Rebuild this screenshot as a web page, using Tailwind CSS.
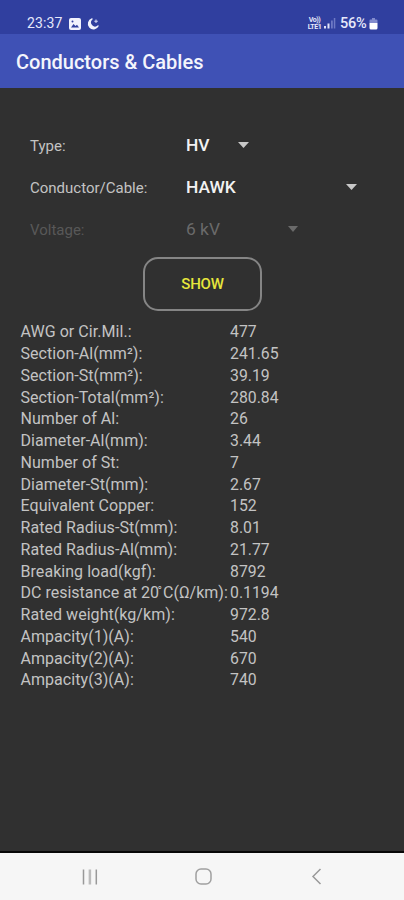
<!DOCTYPE html>
<html lang="en">
<head>
<meta charset="utf-8">
<title>Conductors &amp; Cables</title>
<script src="https://cdn.jsdelivr.net/npm/@tailwindcss/browser@4"></script>
</head>
<body class="w-[404px] h-[900px] overflow-hidden flex flex-col bg-[#303030] font-[Roboto,sans-serif] text-[#c3c3c3]">
<header class="h-[34px] shrink-0 bg-[#303f9f] flex items-start pt-[13px] pl-[27px] pr-[26px] text-[#e6e8fa]">
  <span class="text-[14px] leading-[20px] w-[42px] tracking-[0.1px]">23:37</span>
  <svg class="mt-[5px]" width="12" height="12" viewBox="0 0 12 12"><rect width="12" height="12" rx="2" fill="#f1f2fd"/><path d="M2 9.5 4.5 6 6.5 8 8 6.7 10 9.5z" fill="#303f9f"/><circle cx="3.5" cy="3.6" r="1" fill="#303f9f"/></svg>
  <svg class="mt-[5px] ml-[6px]" width="12" height="12" viewBox="0 0 12 12"><path d="M5 1A5 5 0 1 0 11 8A4.200 4.200 0 0 1 5 1z" fill="#f1f2fd" stroke="#f1f2fd" stroke-width="1.400" stroke-linejoin="round"/><path d="M9 1.500v3.500M7.300 3.300h3.500" stroke="#d4d8f4" stroke-width="1.100"/></svg>
  <div class="ml-auto flex">
    <div class="mt-[4px] w-[15px] text-center text-[7px] leading-[6.500px] font-bold tracking-[-0.4px]"><div>Vo))</div><div>LTE1</div></div>
    <svg class="mt-[4px] ml-px" width="13" height="12" viewBox="0 0 13 12"><path d="M1 9h2v2.500H1zM4.500 6.500h2v5h-2z" fill="#dfe2f8"/><path d="M8 3.500h1.800v8H8zM10.800 1h1.500v10.500h-1.500z" fill="#6d78c4"/></svg>
    <span class="ml-[4px] w-[29px] pt-px text-[14.500px] leading-[20px] font-medium tracking-[-0.2px]">56%</span>
    <svg class="mt-[4px]" width="9" height="13" viewBox="0 0 9 13"><path d="M3 1h3v1.500h1.500q1 0 1 1V6h-8V3.500q0-1 1-1H3z" fill="#828bcd"/><path d="M.5 6h8v5q0 1.500-1.500 1.500H2Q.5 12.500.5 11z" fill="#fff"/></svg>
  </div>
</header>
<div class="h-[54px] shrink-0 bg-[#3f51b5] flex items-center pl-4 pt-[2px]">
  <h1 class="text-[20px] font-medium text-[#f4f5fc] whitespace-nowrap">Conductors &amp; Cables</h1>
</div>
<main class="grow flex flex-col pt-[36px]">
  <section class="pl-[30px]">
    <div class="flex items-center h-[42px]">
      <span class="w-[156px] pt-[2px] text-[15px]">Type:</span><span class="w-[52px] pt-px text-[17.400px] font-medium text-[#f2f2f2]">HV</span>
      <svg width="11" height="6" viewBox="0 0 11 6"><path d="M0 0h11L5.500 6z" fill="#c8c8c8"/></svg>
    </div>
    <div class="flex items-center h-[42px]">
      <span class="w-[156px] pt-[2px] text-[15px]">Conductor/Cable:</span><span class="w-[160px] pt-px text-[17.400px] font-medium text-[#f2f2f2]">HAWK</span>
      <svg width="11" height="6" viewBox="0 0 11 6"><path d="M0 0h11L5.500 6z" fill="#c8c8c8"/></svg>
    </div>
    <div class="flex items-center h-[42px]">
      <span class="w-[156px] pt-[2px] text-[15px] text-[#585858]">Voltage:</span><span class="w-[102px] pt-px text-[17.400px] text-[#6a6a6a]">6 kV</span>
      <svg width="10" height="6" viewBox="0 0 10 6"><path d="M0 0h10L5 6z" fill="#6a6a6a"/></svg>
    </div>
  </section>
  <button class="mt-[7px] ml-[143px] w-[119px] h-[54px] shrink-0 rounded-[15px] border-2 border-[#858585] pt-px text-[15px] font-medium text-[#e6e63c] tracking-[-0.2px]">SHOW</button>
  <dl class="mt-[10.300px] pl-[20.500px] grid grid-cols-[209.500px_1fr] auto-rows-[21.75px] text-[15.800px] leading-[21.75px] whitespace-nowrap [&>dt]:text-[16px] [&>dt]:tracking-[0.05px]">
    <dt>AWG or Cir.Mil.:</dt><dd>477</dd>
    <dt>Section-Al(mm²):</dt><dd>241.65</dd>
    <dt>Section-St(mm²):</dt><dd>39.19</dd>
    <dt>Section-Total(mm²):</dt><dd>280.84</dd>
    <dt>Number of Al:</dt><dd>26</dd>
    <dt>Diameter-Al(mm):</dt><dd>3.44</dd>
    <dt>Number of St:</dt><dd>7</dd>
    <dt>Diameter-St(mm):</dt><dd>2.67</dd>
    <dt>Equivalent Copper:</dt><dd>152</dd>
    <dt>Rated Radius-St(mm):</dt><dd>8.01</dd>
    <dt>Rated Radius-Al(mm):</dt><dd>21.77</dd>
    <dt>Breaking load(kgf):</dt><dd>8792</dd>
    <dt class="tracking-normal!">DC resistance at 20<span class="relative -top-[3px] text-[12px] leading-none tracking-[1px] -ml-[1.500px]">°</span>C(Ω/km):</dt><dd>0.1194</dd>
    <dt>Rated weight(kg/km):</dt><dd>972.8</dd>
    <dt>Ampacity(1)(A):</dt><dd>540</dd>
    <dt>Ampacity(2)(A):</dt><dd>670</dd>
    <dt>Ampacity(3)(A):</dt><dd>740</dd>
  </dl>
</main>
<nav class="h-[49px] shrink-0 border-t-2 border-[#080808] bg-[#f6f6f6] flex items-center">
  <svg class="ml-[82px]" width="16" height="16" viewBox="0 0 16 16" fill="none" stroke="#999" stroke-width="1.500"><path d="M1.500.5v15M14.300.5v15"/><path d="M7.900.5v15" stroke="#bbb" stroke-width="2.500"/></svg>
  <svg class="ml-[97px]" width="17" height="17" viewBox="0 0 17 17" fill="none" stroke="#a0a0a0" stroke-width="1.500"><rect x="1" y="1" width="15" height="15" rx="5"/></svg>
  <svg class="ml-[99px]" width="11" height="17" viewBox="0 0 11 17" fill="none" stroke="#999" stroke-width="1.500"><path d="M9.500 1 2 8.500 9.500 16"/></svg>
</nav>
</body>
</html>
